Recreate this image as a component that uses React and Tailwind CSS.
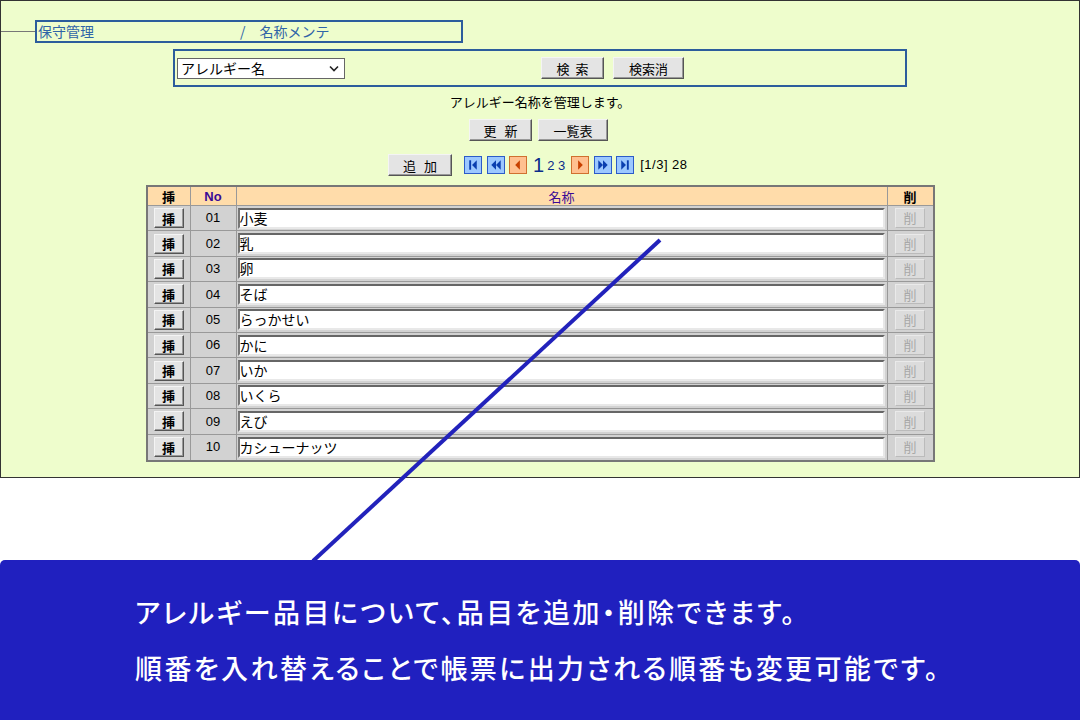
import React from 'react';

const rows = [
  ['01', '小麦'],
  ['02', '乳'],
  ['03', '卵'],
  ['04', 'そば'],
  ['05', 'らっかせい'],
  ['06', 'かに'],
  ['07', 'いか'],
  ['08', 'いくら'],
  ['09', 'えび'],
  ['10', 'カシューナッツ'],
];

const jp = { fontFamily: '"Noto Sans CJK JP", "Liberation Sans", sans-serif' };
const latin = { fontFamily: '"Liberation Sans", sans-serif' };

const Btn = ({ children, className = '' }) => (
  <div
    className={`flex items-center justify-center bg-[#e4e4e4] border border-t-[#f4f4f4] border-l-[#f4f4f4] border-r-[#555] border-b-[#555] shadow-[inset_-1px_-1px_0_#999] text-[13px] text-black leading-none ${className}`}
  >
    {children}
  </div>
);

const PageIcon = ({ kind, orange }) => {
  const fg = orange ? '#c84000' : '#0a3fb0';
  const tri = (x, dir) =>
    dir === 'l' ? `M${x + 5} 3.5 L${x} 8.5 L${x + 5} 13.5 Z` : `M${x} 3.5 L${x + 5} 8.5 L${x} 13.5 Z`;
  let d = [];
  if (kind === 'first') d = [tri(7, 'l')];
  if (kind === 'prev2') d = [tri(3, 'l'), tri(8, 'l')];
  if (kind === 'prev') d = [tri(5, 'l')];
  if (kind === 'next') d = [tri(6, 'r')];
  if (kind === 'next2') d = [tri(3, 'r'), tri(8, 'r')];
  if (kind === 'last') d = [tri(4, 'r')];
  return (
    <div
      className={`w-[18px] h-[18px] border ${orange ? 'bg-[#ffc090] border-[#d07030]' : 'bg-[#9cc8ff] border-[#2c5cc8]'}`}
    >
      <svg width="16" height="16" viewBox="0 0 16 17">
        {d.map((p, i) => (
          <path key={i} d={p} fill={fg} />
        ))}
        {kind === 'first' && <rect x="4" y="3.5" width="2" height="10" fill={fg} />}
        {kind === 'last' && <rect x="10" y="3.5" width="2" height="10" fill={fg} />}
      </svg>
    </div>
  );
};

export default function App() {
  return (
    <div className="relative w-[1080px] h-[720px] bg-white overflow-hidden" style={jp}>
      {/* screenshot */}
      <div className="h-[478px] bg-[#eefdcc] border border-[#333] pt-[19px]">
        <div className="flex items-center">
          <div className="w-[34px] h-px bg-[#777]" />
          <div className="w-[428px] h-[23px] border-2 border-[#2c5d9c] flex items-center text-[14px] text-[#2f64a8]">
            <span className="ml-[1px]">保守管理</span>
            <span className="ml-[146px]">/</span>
            <span className="ml-[14px]">名称メンテ</span>
          </div>
        </div>

        <div className="mx-auto mt-[6px] w-[734px] h-[38px] border-2 border-[#2c5d9c] flex items-center">
          <div className="ml-[2px] w-[168px] h-[21px] bg-white border border-[#666] flex items-center justify-between pl-[3px] pr-[5px] text-[14px] text-black">
            <span>アレルギー名</span>
            <svg width="10" height="7" viewBox="0 0 10 7">
              <path d="M1 1.5 L5 5.5 L9 1.5" stroke="#222" strokeWidth="1.6" fill="none" />
            </svg>
          </div>
          <Btn className="ml-[196px] w-[63px] h-[22px] tracking-[6px] pl-[6px]">検索</Btn>
          <Btn className="ml-[9px] w-[71px] h-[22px]">検索消</Btn>
        </div>

        <div className="mt-[6px] text-center text-[13px] text-black leading-[18px]">アレルギー名称を管理します。</div>

        <div className="mt-[8px] flex justify-center gap-[6px] pr-[3px]">
          <Btn className="w-[63px] h-[22px] tracking-[8px] pl-[8px]">更新</Btn>
          <Btn className="w-[70px] h-[22px]">一覧表</Btn>
        </div>

        <div className="mt-[13px] flex items-center h-[22px]">
          <Btn className="ml-[387px] w-[64px] h-[22px] tracking-[8px] pl-[8px]">追加</Btn>
          <div className="ml-[12px] flex items-center gap-[3px]">
            <PageIcon kind="first" />
            <div className="ml-[2px]"><PageIcon kind="prev2" /></div>
            <div className="ml-[1px]"><PageIcon kind="prev" orange /></div>
          </div>
          <span className="ml-[6px] text-[20px] leading-none text-[#0a2c8a]" style={latin}>1</span>
          <span className="ml-[3px] text-[13px] leading-none text-[#0a2c8a]" style={latin}>2 3</span>
          <div className="ml-[6px] flex items-center gap-[3px]">
            <PageIcon kind="next" orange />
            <div className="ml-[2px]"><PageIcon kind="next2" /></div>
            <div className="ml-[1px]"><PageIcon kind="last" /></div>
          </div>
          <span className="ml-[6px] text-[13px] text-black tracking-[0.5px]" style={latin}>[1/3] 28</span>
        </div>

        {/* table */}
        <div className="mx-auto mt-[9px] w-[789px] border-2 border-[#777] bg-[#d2d2d2]">
          <div className="flex h-[19px] bg-[#ffdcaa] border-b border-[#999] text-[13px] leading-[19px]">
            <div className="w-[43px] border-r border-[#999] text-center text-black font-bold">挿</div>
            <div className="w-[46px] border-r border-[#999] text-center text-[#3a0a96] font-bold" style={latin}>No</div>
            <div className="flex-1 border-r border-[#999] text-center text-[#3a0a96]">名称</div>
            <div className="w-[45px] text-center text-black font-bold">削</div>
          </div>
          {rows.map(([no, name], i) => (
            <div key={no} className={`flex h-[25.4px] ${i < rows.length - 1 ? 'border-b border-[#999]' : ''}`}>
              <div className="w-[43px] border-r border-[#999] flex items-center justify-center">
                <Btn className="w-[30px] h-[20px] font-bold">挿</Btn>
              </div>
              <div className="w-[46px] border-r border-[#999] flex items-center justify-center text-[13px] text-black" style={latin}>
                {no}
              </div>
              <div className="flex-1 border-r border-[#999] flex items-center pl-[1px] pr-[2px]">
                <div className="w-full h-[21px] bg-white border-2 border-t-[#666] border-l-[#777] border-r-[#e8e8e8] border-b-[#e8e8e8] text-[14px] leading-[17px] text-black">
                  {name}
                </div>
              </div>
              <div className="w-[45px] flex items-center justify-center">
                <div className="w-[30px] h-[20px] flex items-center justify-center bg-[#dcdcdc] border border-[#eaeaea] border-r-[#bbb] border-b-[#bbb] text-[13px] text-[#a8a8a8]">
                  削
                </div>
              </div>
            </div>
          ))}
        </div>
      </div>

      {/* caption */}
      <div
        className="absolute left-0 top-[560px] w-[1080px] h-[160px] bg-[#2020bf] rounded-t-[5px] pl-[135px] pt-[24px] text-white text-[27px] font-medium leading-[56px] tracking-[2.4px]"
        style={{ fontFeatureSettings: '"palt"' }}
      >
        <div>アレルギー品目について、品目を追加・削除できます。</div>
        <div>順番を入れ替えることで帳票に出力される順番も変更可能です。</div>
      </div>

      <svg className="absolute inset-0 pointer-events-none" width="1080" height="720">
        <line x1="660" y1="240" x2="313" y2="561" stroke="#2222bb" strokeWidth="4" />
      </svg>
    </div>
  );
}
